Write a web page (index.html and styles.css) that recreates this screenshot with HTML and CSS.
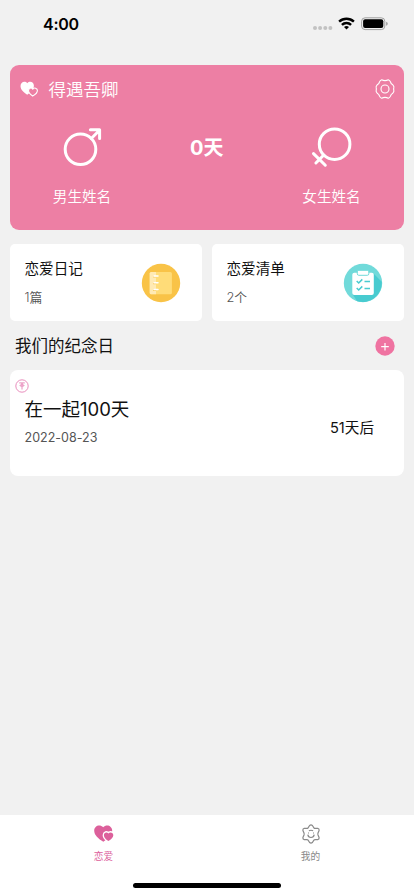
FILE: index.html
```html
<!DOCTYPE html>
<html lang="zh-CN">
<head>
<meta charset="utf-8">
<meta name="viewport" content="width=device-width, initial-scale=1">
<title>恋爱</title>
<link rel="stylesheet" href="styles.css">
</head>
<body>
<div class="screen">
  <header class="status">
    <span class="clock">4:00</span>
    <svg class="status-icons" width="76" height="16" viewBox="0 0 76 16">
      <g fill="#c2c2c2"><circle cx="3" cy="12" r="2"/><circle cx="8.100" cy="12" r="2"/><circle cx="13.300" cy="12" r="2"/><circle cx="18.400" cy="12" r="2"/></g>
      <g fill="none" stroke="#000" stroke-width="2.400"><path d="M27.100 5.700a10.800 10.800 0 0 1 14.800 0"/><path d="M29.900 8.900a6.600 6.600 0 0 1 9.200 0"/></g>
      <path d="M34.500 13.600l-2.500-2.500a3.700 3.700 0 0 1 5 0z"/>
      <rect x="49.600" y="1.800" width="23.200" height="11.800" rx="3.500" fill="none" stroke="#a0a0a0"/>
      <rect x="51.100" y="3.300" width="20.200" height="8.800" rx="2"/>
      <path d="M74.200 5.800q1.500.6 1.500 2t-1.500 2z" fill="#999"/>
    </svg>
  </header>
  <main>
    <section class="hero">
      <div class="hero-top">
        <svg width="18" height="16" viewBox="0 0 18 16">
          <path d="M7.200 13.800C3.500 11.500.5 8.600.5 5.100.5 1 4.900-.6 7.300 2.200 9.700-.6 13.900 1 13.900 4.800c0 3.700-3.100 6.700-6.700 9z" fill="#fff"/>
          <path d="M12.700 15C10.300 13.500 8.500 11.900 8.500 9.600c0-2.600 2.900-3.400 4.300-1.500 1.400-1.900 4.600-1 4.600 1.400 0 2.400-2.300 4.200-4.700 5.500z" fill="#ed7fa4" stroke="#fff" stroke-width="1.100"/>
        </svg>
        <h1>得遇吾卿</h1>
        <svg class="gear" width="20" height="20" viewBox="0 0 20 20" fill="none" stroke="#fff" stroke-width="1.100" stroke-linejoin="round">
          <path d="M6.700.7Q8.200 1.600 10 1.600T13.300.7Q14.800 1.200 15.500 2.900 15.800 4.800 17.800 5.800 19.300 7.400 18.800 9 18.400 10 18.800 11 19.300 12.600 17.800 14.200 15.800 15.200 15.500 17.100 14.800 18.800 13.300 19.300 11.800 18.400 10 18.400T6.700 19.300Q5.200 18.800 4.500 17.100 4.200 15.200 2.200 14.200.7 12.600 1.200 11 1.600 10 1.200 9 .7 7.400 2.200 5.800 4.200 4.800 4.500 2.900 5.200 1.200 6.700.7z"/>
          <circle cx="10" cy="10" r="4"/>
        </svg>
      </div>
      <div class="couple">
        <div class="person">
          <svg width="46" height="46" viewBox="0 0 46 46" fill="none" stroke="#fff" stroke-width="3" stroke-linecap="round" stroke-linejoin="round">
            <circle cx="21.500" cy="25.300" r="15.300"/><path d="M32.300 14.500L40.500 6.300M31.400 5.700h9.200v8.900"/>
          </svg>
          <span>男生姓名</span>
        </div>
        <div class="days">0天</div>
        <div class="person">
          <svg width="46" height="46" viewBox="0 0 46 46" fill="none" stroke="#fff" stroke-width="3" stroke-linecap="round">
            <circle cx="25.600" cy="20.200" r="15.300"/><path d="M14.800 31L6.900 39M4.500 29.600L16.300 41.200"/>
          </svg>
          <span>女生姓名</span>
        </div>
      </div>
    </section>
    <section class="cards">
      <div class="card">
        <div><h2>恋爱日记</h2><p>1篇</p></div>
        <svg width="40" height="40" viewBox="0 0 40 40">
          <circle cx="20" cy="20" r="19.200" fill="#f9c347"/>
          <rect x="8.700" y="9" width="22.200" height="22.200" rx="1.500" fill="#ffdc78"/>
          <path d="M10.200 9h4.800v22.200h-4.800a1.500 1.500 0 0 1-1.500-1.500V10.500a1.500 1.500 0 0 1 1.500-1.500z" fill="#ffeab5"/>
          <path d="M12.600 14h2M12.600 20.700h2M12.600 27.400h2" stroke="#fbce62" stroke-width="1.200" stroke-linecap="round"/>
          <path d="M13.200 13.100h3.800M13.200 19.800h3.800M13.200 26.500h3.800" stroke="#fff" stroke-width="1.500" stroke-linecap="round"/>
        </svg>
      </div>
      <div class="card">
        <div><h2>恋爱清单</h2><p>2个</p></div>
        <svg width="40" height="40" viewBox="0 0 40 40">
          <circle cx="20" cy="20" r="19.200" fill="#71dada"/>
          <path d="M30.500 10.500L38.700 18.700A19.200 19.200 0 0 1 14 38.200L9.500 31z" fill="#48cbd0"/>
          <rect x="9.300" y="9.800" width="21.500" height="22.200" rx="2" fill="#fff"/>
          <rect x="14.300" y="7.300" width="11.500" height="5" rx="1.500" fill="#fff" stroke="#71dada" stroke-width="1"/>
          <path d="M13.700 18l2 2 3.600-3.600M13.700 25l2 2 3.600-3.600M21.500 18.400h5.500M21.500 25.400h5.500" fill="none" stroke="#48cbd0" stroke-width="1.500"/>
        </svg>
      </div>
    </section>
    <div class="section-head">
      <h2>我们的纪念日</h2>
      <svg width="20" height="20" viewBox="0 0 20 20"><circle cx="10" cy="10" r="9.700" fill="#ef73a1"/><path d="M6.200 10.700h7.600M10 6.900v7.600" stroke="#fff" stroke-width="1.200"/></svg>
    </div>
    <section class="event">
      <svg class="pin" width="14" height="14" viewBox="0 0 14 14" fill="none" stroke="#e580b4" stroke-width=".9"><circle cx="7" cy="7" r="6.200"/><path d="M4.200 3.900h5.600M7 4.300v6.200M4.600 7L7 4.600 9.400 7M5.200 7h3.600"/></svg>
      <div class="event-row">
        <div class="event-info"><h3>在一起100天</h3><time>2022-08-23</time></div>
        <span class="left">51天后</span>
      </div>
    </section>
  </main>
  <footer>
    <nav class="tabs">
      <div class="tab active">
        <svg width="22" height="22" viewBox="0 0 22 22">
          <path d="M10.300 18.700C5.400 15.700 1.200 12.100 1.200 7.700 1.200 2.500 7 .7 10.200 4.300 13.200.7 19.200 2.500 19.200 7.700c0 4.400-4 8-8.900 11z" fill="#dc609b"/>
          <path d="M15.400 18C12.600 16.200 10.900 14.500 10.900 12.200c0-2.800 3-3.700 4.500-1.700 1.500-2 4.900-1.100 4.900 1.700 0 2.300-2 4-4.900 5.800z" fill="#dc609b" stroke="#fff" stroke-width="2.600" paint-order="stroke"/>
        </svg>
        <span>恋爱</span>
      </div>
      <div class="tab">
        <svg width="22" height="22" viewBox="0 0 22 22" fill="none" stroke="#8a8a8a" stroke-width="1.200" stroke-linejoin="round">
          <path d="M9.600 2.500Q11 1.300 12.400 2.500L13.900 4.800Q14.300 5.400 15.200 5.400L17.700 5.300Q19.400 5.900 19.100 7.500L18 10.100Q17.700 11 18 11.900L19.100 14.500Q19.400 16.100 17.700 16.700L15.200 16.600Q14.300 16.600 13.900 17.200L12.400 19.500Q11 20.700 9.600 19.500L8.100 17.200Q7.700 16.600 6.800 16.600L4.300 16.700Q2.600 16.100 2.900 14.500L4 11.900Q4.300 11 4 10.100L2.900 7.500Q2.600 5.900 4.300 5.300L6.800 5.400Q7.700 5.400 8.100 4.800z"/>
          <path d="M8.900 7.800Q11 6.700 13.100 7.800M7.800 11.700Q8.200 14.500 11 14.500T14.200 11.700M8 10h1M13 10h1"/>
        </svg>
        <span>我的</span>
      </div>
    </nav>
    <div class="home"></div>
  </footer>
</div>
</body>
</html>
```
FILE: styles.css
```css
* { box-sizing: border-box; }
body, h1, h2, h3, p { margin: 0; font-weight: 400; }
body { background: #f1f1f1; color: #111; font-family: Inter, "Noto Sans CJK SC", sans-serif; }
svg { display: block; flex: none; }
.screen { height: 896px; display: flex; flex-direction: column; overflow: hidden; }
.status { height: 65px; padding: 16px 26px 0 43px; display: flex; justify-content: space-between; align-items: flex-start; }
.clock { font-size: 16px; line-height: 16px; font-weight: 600; letter-spacing: -.25px; color: #000; }
main { flex: 1; padding: 0 10px; }
.hero { height: 164.500px; border-radius: 9px; background: #ed7fa4; color: #fff; padding: 14px 9.500px 0 10px; }
.hero-top { display: flex; align-items: center; height: 20px; }
.hero h1 { font-size: 17.500px; line-height: 20px; margin: 2px 0 0 10.500px; font-weight: 350; }
.gear { margin-left: auto; }
.couple { display: flex; justify-content: space-between; margin: 25px 33px 0 32px; }
.person { width: 60px; display: flex; flex-direction: column; align-items: center; font-size: 14.600px; }
.person span { line-height: 20px; margin-top: 16.500px; white-space: nowrap; font-weight: 350; }
.days { font-size: 20px; line-height: 48px; font-weight: 700; }
.cards { display: grid; grid-template-columns: 1fr 1fr; gap: 10px; margin-top: 14.500px; }
.card { height: 77px; border-radius: 5px; background: #fff; padding: 0 20.800px 0 14.500px; display: flex; justify-content: space-between; align-items: center; }
.card h2 { font-size: 14.600px; line-height: 20px; }
.card p { font-size: 12.800px; line-height: 18px; margin-top: 10px; color: #555; font-weight: 350; }
.section-head { height: 49px; padding: 0 9.500px 0 5px; display: flex; align-items: center; justify-content: space-between; }
.section-head h2 { font-size: 16.500px; line-height: 24px; margin-top: 1px; }
.event { height: 105.500px; border-radius: 8px; background: #fff; padding: 9px 30px 0 5px; }
.event-row { display: flex; justify-content: space-between; align-items: center; padding-left: 9.500px; margin-top: 2.500px; height: 65px; }
.event-info { align-self: flex-start; }
.event h3 { font-size: 18.500px; line-height: 26px; }
.event time { display: block; font-size: 12.500px; line-height: 18px; margin-top: 7.500px; color: #555; letter-spacing: .02px; }
.left { font-size: 14.600px; line-height: 20px; }
footer { height: 81px; background: #fff; }
.tabs { display: flex; height: 68px; padding-top: 8px; }
.tab { flex: 1; display: flex; flex-direction: column; align-items: center; color: #888; font-size: 9.700px; }
.tab span { line-height: 14px; margin-top: 4.500px; }
.active { color: #dc609b; }
.home { width: 148px; height: 5px; border-radius: 3px; background: #000; margin: 0 auto; }
```
